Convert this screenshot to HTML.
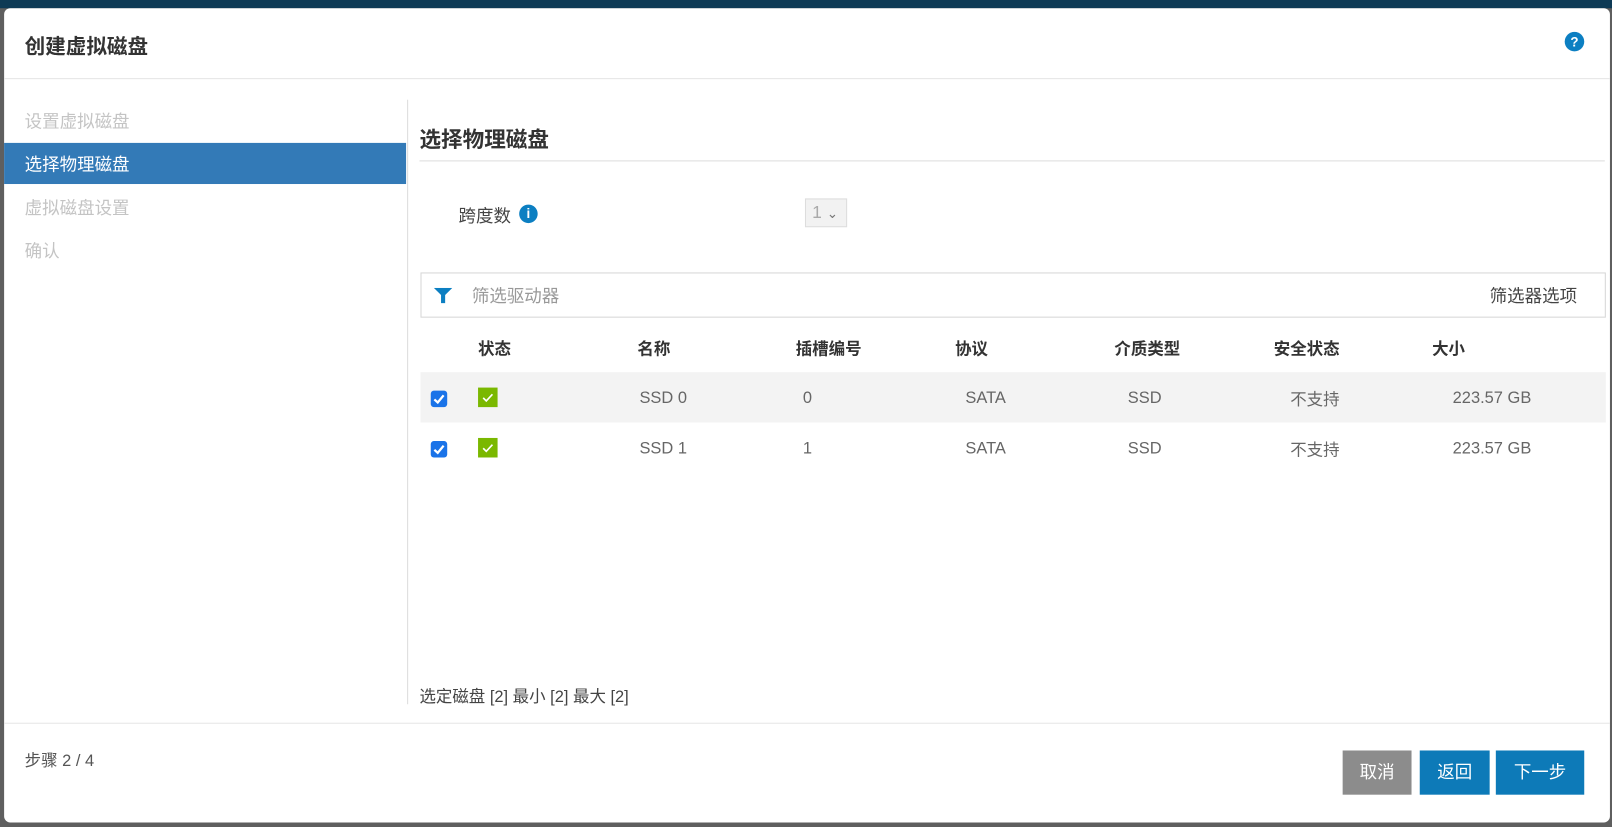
<!DOCTYPE html>
<html><head><meta charset="utf-8"><style>
*{margin:0;padding:0;box-sizing:border-box}
html,body{width:1612px;height:826px;overflow:hidden;background:#5f5f5f}
#w{position:absolute;left:0;top:0;width:1568px;height:804px;transform:scale(1.02806);transform-origin:0 0;font-family:"Liberation Sans","Noto Sans CJK SC",sans-serif}
.a{position:absolute;white-space:nowrap}
.modal{position:absolute;left:4px;top:8px;width:1562px;height:792px;background:#fff;border-radius:6px}
.cell{font-size:16px;color:#666}
.hd{font-size:16px;font-weight:bold;color:#333}
.cb{width:16px;height:16px;background:#1a73e8;border-radius:3px}
.ok{width:19px;height:19px;background:#7ab800}
.btn{color:#fff;font-size:17px;text-align:center;line-height:43px;height:43px}
</style></head><body><div id="w">
<div class="a" style="left:0;top:0;width:1568px;height:8px;background:#0e3a55"></div>
<div class="modal">
<div class="a" style="left:20px;top:21px;font-size:20px;font-weight:bold;color:#333">创建虚拟磁盘</div>
<div class="a" style="left:1518px;top:23px;width:19px;height:19px;border-radius:50%;background:#0c7fc2;color:#fff;font-size:13px;font-weight:bold;text-align:center;line-height:19px">?</div>
<div class="a" style="left:0;top:68px;width:1562px;height:1px;background:#e5e5e5"></div>
<div class="a" style="left:20px;top:96px;font-size:17px;color:#c4c4c4">设置虚拟磁盘</div>
<div class="a" style="left:0;top:131px;width:391px;height:40px;background:#337ab7"></div>
<div class="a" style="left:20px;top:138px;font-size:17px;color:#fff">选择物理磁盘</div>
<div class="a" style="left:20px;top:180px;font-size:17px;color:#c4c4c4">虚拟磁盘设置</div>
<div class="a" style="left:20px;top:222px;font-size:17px;color:#c4c4c4">确认</div>
<div class="a" style="left:392px;top:89px;width:1px;height:588px;background:#ddd"></div>
<div class="a" style="left:404px;top:112px;font-size:21px;font-weight:bold;color:#333">选择物理磁盘</div>
<div class="a" style="left:404px;top:148px;width:1153px;height:1px;background:#ddd"></div>
<div class="a" style="left:442px;top:188px;font-size:17px;color:#444">跨度数</div>
<div class="a" style="left:501px;top:191px;width:18px;height:18px;border-radius:50%;background:#0c7fc2;color:#fff;font-size:13px;font-weight:bold;text-align:center;line-height:18px">i</div>
<div class="a" style="left:779px;top:185px;width:41px;height:28px;background:#f2f2f2;border:1px solid #ddd;font-size:17px;color:#aaa;padding:3px 0 0 6px">1 <span style="color:#777;font-size:13px">&#8964;</span></div>
<div class="a" style="left:405px;top:257px;width:1153px;height:44px;border:1px solid #d6d6d6"></div>
<svg class="a" style="left:418px;top:272px" width="18" height="15" viewBox="0 0 18 15"><path d="M0 0H18L11 7V15H7V7Z" fill="#0c7fc2"/></svg>
<div class="a" style="left:455px;top:266px;font-size:17px;color:#999">筛选驱动器</div>
<div class="a" style="left:1445px;top:266px;font-size:17px;color:#444">筛选器选项</div>
<div class="a hd" style="left:461px;top:318px">状态</div>
<div class="a hd" style="left:616px;top:318px">名称</div>
<div class="a hd" style="left:770px;top:318px">插槽编号</div>
<div class="a hd" style="left:925px;top:318px">协议</div>
<div class="a hd" style="left:1080px;top:318px">介质类型</div>
<div class="a hd" style="left:1235px;top:318px">安全状态</div>
<div class="a hd" style="left:1389px;top:318px">大小</div>
<div class="a" style="left:405px;top:354px;width:1153px;height:49px;background:#f3f3f3"></div>
<div class="a cb" style="left:415px;top:372px"><svg width="16" height="16"><path d="M3.5 8.5L6.8 11.5L12.5 4.5" stroke="#fff" stroke-width="2.2" fill="none"/></svg></div>
<div class="a ok" style="left:461px;top:369px"><svg width="19" height="19"><path d="M5 10L8 13L14 6.5" stroke="#fff" stroke-width="1.6" fill="none"/></svg></div>
<div class="a cb" style="left:415px;top:421px"><svg width="16" height="16"><path d="M3.5 8.5L6.8 11.5L12.5 4.5" stroke="#fff" stroke-width="2.2" fill="none"/></svg></div>
<div class="a ok" style="left:461px;top:418px"><svg width="19" height="19"><path d="M5 10L8 13L14 6.5" stroke="#fff" stroke-width="1.6" fill="none"/></svg></div>
<div class="a cell" style="left:618px;top:371px">SSD 0</div>
<div class="a cell" style="left:777px;top:371px">0</div>
<div class="a cell" style="left:935px;top:371px">SATA</div>
<div class="a cell" style="left:1093px;top:371px">SSD</div>
<div class="a cell" style="left:1251px;top:367px">不支持</div>
<div class="a cell" style="left:1409px;top:371px">223.57 GB</div>
<div class="a cell" style="left:618px;top:420px">SSD 1</div>
<div class="a cell" style="left:777px;top:420px">1</div>
<div class="a cell" style="left:935px;top:420px">SATA</div>
<div class="a cell" style="left:1093px;top:420px">SSD</div>
<div class="a cell" style="left:1251px;top:416px">不支持</div>
<div class="a cell" style="left:1409px;top:420px">223.57 GB</div>
<div class="a" style="left:404px;top:656px;font-size:16px;color:#444">选定磁盘 [2] 最小 [2] 最大 [2]</div>
<div class="a" style="left:0;top:695px;width:1562px;height:1px;background:#e5e5e5"></div>
<div class="a" style="left:20px;top:718px;font-size:16px;color:#555">步骤 2 / 4</div>
<div class="a btn" style="left:1302px;top:722px;width:67px;background:#8c8c8c">取消</div>
<div class="a btn" style="left:1377px;top:722px;width:68px;background:#0d7ab8">返回</div>
<div class="a btn" style="left:1451px;top:722px;width:86px;background:#0d7ab8">下一步</div>
</div>
</div></body></html>
